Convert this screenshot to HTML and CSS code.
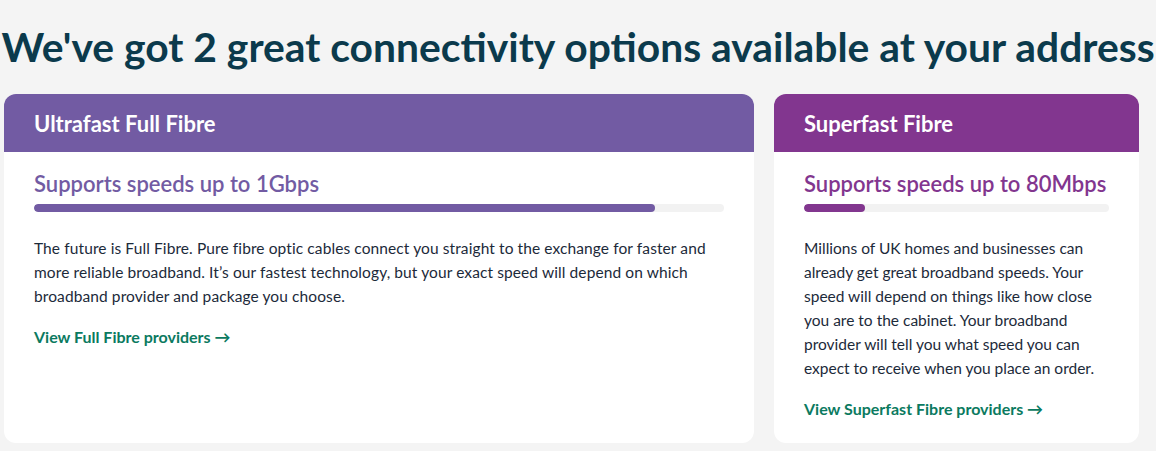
FILE: index.html
```html
<!DOCTYPE html>
<html>
<head>
<meta charset="utf-8">
<link rel="stylesheet" href="styles.css">
</head>
<body>
<h1 class="title">We've got 2 great connectivity options available at your address</h1>
<div class="cards">
  <div class="card card-ultra">
    <div class="card-head">Ultrafast Full Fibre</div>
    <div class="card-body">
      <div class="speed">Supports speeds up to 1Gbps</div>
      <div class="bar"><div class="fill" style="width: 90%"></div></div>
      <p class="desc">The future is Full Fibre. Pure fibre optic cables connect you straight to the exchange for faster and more reliable broadband. It’s our fastest technology, but your exact speed will depend on which broadband provider and package you choose.</p>
      <a class="link" href="#">View Full Fibre providers →</a>
    </div>
  </div>
  <div class="card card-super">
    <div class="card-head">Superfast Fibre</div>
    <div class="card-body">
      <div class="speed">Supports speeds up to 80Mbps</div>
      <div class="bar"><div class="fill" style="width: 20%"></div></div>
      <p class="desc">Millions of UK homes and businesses can already get great broadband speeds. Your speed will depend on things like how close you are to the cabinet. Your broadband provider will tell you what speed you can expect to receive when you place an order.</p>
      <a class="link" href="#">View Superfast Fibre providers →</a>
    </div>
  </div>
</div>
</body>
</html>
```
FILE: styles.css
```css
html, body {
  margin: 0;
  padding: 0;
  background: #f4f4f4;
  font-family: Lato, "Noto Sans", sans-serif;
}
.title {
  margin: 0;
  padding-top: 24px;
  height: 70px;
  box-sizing: border-box;
  font-size: 40.8px;
  line-height: 46px;
  font-weight: 700;
  color: #0b3a4c;
  text-align: center;
  white-space: nowrap;
}
.cards {
  display: grid;
  grid-template-columns: 750px 365px;
  column-gap: 20px;
  padding-left: 4px;
  margin-top: 24px;
}
.card {
  background: #fff;
  border-radius: 12px;
  overflow: hidden;
  display: flex;
  flex-direction: column;
  height: 349px;
}
.card-head {
  height: 58px;
  box-sizing: border-box;
  padding: 0 30px;
  display: flex;
  align-items: center;
  color: #fff;
  font-size: 22px;
  font-weight: 700;
}
.card-ultra .card-head { background: #725ba3; }
.card-super .card-head { background: #82368f; }
.card-body {
  padding: 18px 30px 0;
}
.speed {
  font-size: 22px;
  line-height: 28px;
  font-weight: 600;
}
.card-ultra .speed { color: #725ba3; }
.card-super .speed { color: #82368f; }
.bar {
  margin-top: 6px;
  height: 8px;
  border-radius: 4px;
  background: #f2f2f2;
  overflow: hidden;
}
.fill {
  height: 100%;
  border-radius: 4px;
}
.card-ultra .fill { background: #725ba3; }
.card-super .fill { background: #82368f; }
.desc {
  margin: 24px 0 0;
  font-size: 15.5px;
  line-height: 24px;
  color: #1c2a3a;
}
.card-ultra .desc { letter-spacing: 0.1px; }
.link {
  display: block;
  margin-top: 18px;
  font-size: 16px;
  line-height: 22px;
  font-weight: 700;
  color: #0b7a60;
  text-decoration: none;
}
```
